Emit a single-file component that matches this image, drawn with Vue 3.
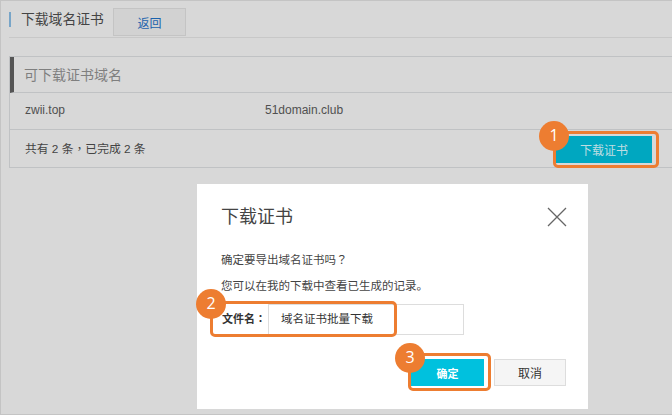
<script setup>
const domains = ['zwii.top', '51domain.club']
</script>

<template>
  <div class="page">
    <header class="top">
      <h1 class="title">下载域名证书</h1>
      <button class="back">返回</button>
    </header>
    <section class="panel">
      <div class="panel-head">可下载证书域名</div>
      <div class="domains">
        <span v-for="d in domains" :key="d" class="domain">{{ d }}</span>
      </div>
      <div class="summary">
        <span>共有 2 条<span class="tc">，</span>已完成 2 条</span>
        <button class="download">下载证书</button>
      </div>
    </section>

    <div class="dialog">
      <div class="dialog-head">
        <h2>下载证书</h2>
        <svg class="close" width="20" height="20" viewBox="0 0 20 20"><path d="M1 1 19 19M19 1 1 19" stroke="#666" stroke-width="1.3" fill="none"/></svg>
      </div>
      <p class="q first">确定要导出域名证书吗<span class="tc">？</span></p>
      <p class="q second">您可以在我的下载中查看已生成的记录。</p>
      <div class="file">
        <label>文件名<span class="tc">：</span></label>
        <div class="input">域名证书批量下载</div>
      </div>
      <div class="actions">
        <button class="ok">确定</button>
        <button class="cancel">取消</button>
      </div>
    </div>

    <div class="ring r1"></div>
    <div class="ring r2"></div>
    <div class="ring r3"></div>
    <div class="badge b1">1</div>
    <div class="badge b2">2</div>
    <div class="badge b3">3</div>
  </div>
</template>

<style>
html, body { margin: 0; padding: 0; }
</style>

<style scoped>
.page {
  position: relative;
  box-sizing: border-box;
  width: 672px;
  height: 415px;
  overflow: hidden;
  background: #d8d8d8;
  border: 1px solid #c4c4c4;
  border-right: 0;
  padding: 7px 0 0 8px;
  font-family: "Liberation Sans", "Noto Sans CJK SC", sans-serif;
  color: #444;
}
.tc { font-family: "Noto Sans CJK TC", sans-serif; }
button { font-family: inherit; padding: 0; cursor: pointer; }
.top {
  display: flex;
  align-items: flex-start;
  height: 29px;
  border-bottom: 1px solid #c8c8c8;
}
.title {
  margin: 4px 8px 0 0;
  padding-left: 10px;
  border-left: 2px solid #78a5c8;
  height: 15px;
  line-height: 15px;
  font-size: 13.8px;
  font-weight: 400;
  color: #444;
  width: 84px;
  white-space: nowrap;
}
.back {
  width: 73px;
  height: 28px;
  border: 1px solid #c4c4c4;
  background: #d2d2d2;
  color: #1a62ad;
  font-size: 12px;
}
.panel {
  margin-top: 18px;
  border: 1px solid #c0c2c4;
  border-right: 0;
  height: 112px;
  box-sizing: border-box;
}
.panel-head {
  box-sizing: border-box;
  height: 36px;
  line-height: 37px;
  border-left: 4px solid #555;
  border-bottom: 1px solid #c0c2c4;
  padding-left: 10px;
  font-size: 14px;
  color: #7f7f7f;
}
.domains {
  box-sizing: border-box;
  height: 37px;
  line-height: 35px;
  display: flex;
  padding-left: 15px;
  border-bottom: 1px solid #c0c2c4;
  font-size: 12px;
  color: #505050;
}
.domain { width: 240px; }
.summary {
  position: relative;
  padding-left: 15px;
  height: 37px;
  line-height: 36px;
  font-size: 11.8px;
  color: #444;
}
.download {
  position: absolute;
  left: 546px;
  top: 6px;
  width: 96px;
  height: 27px;
  border: 0;
  background: #00a7c0;
  color: #bfdde2;
  font-size: 12px;
}
.dialog {
  position: absolute;
  left: 196px;
  top: 183px;
  width: 391px;
  height: 225px;
  box-sizing: border-box;
  background: #fff;
  padding: 20px 0 0 24px;
  color: #444;
}
.dialog-head { display: flex; justify-content: space-between; height: 31px; }
.dialog-head h2 { margin: 0; font-size: 18px; line-height: 26px; font-weight: 400; color: #444; }
.close { margin: 3px 21px 0 0; }
.q { margin: 0; font-size: 11.5px; line-height: 16px; color: #444; }
.first { margin-top: 16px; }
.second { margin-top: 10px; white-space: nowrap; }
.file { display: flex; align-items: stretch; height: 31px; margin: 10px 0 0 0; }
.file label { font-size: 11px; font-weight: 700; line-height: 29px; width: 47px; color: #333; padding-left: 1px; margin-right: -1px; }
.input {
  box-sizing: border-box;
  width: 196px;
  height: 31px;
  border: 1px solid #ddd;
  padding-left: 12px;
  line-height: 29px;
  font-size: 11.5px;
  color: #333;
}
.actions { display: flex; margin: 24px 0 0 190px; gap: 10px; }
.ok {
  width: 73px;
  height: 27px;
  border: 0;
  background: #00c1de;
  color: #fff;
  font-size: 11px;
  font-weight: 700;
}
.cancel {
  width: 72px;
  height: 27px;
  border: 1px solid #ddd;
  background: #f5f5f5;
  color: #333;
  font-size: 12px;
}
.ring {
  position: absolute;
  box-sizing: border-box;
  border: 3px solid #ed7d31;
  border-radius: 5px;
}
.r1 { left: 552px; top: 130px; width: 106px; height: 37px; }
.r2 { left: 209px; top: 300px; width: 187px; height: 36px; }
.r3 { left: 407px; top: 352px; width: 83px; height: 38px; }
.badge {
  position: absolute;
  width: 30px;
  height: 30px;
  border-radius: 50%;
  background: #ed7d31;
  color: #fff;
  text-align: center;
  line-height: 28px;
  font-size: 16px;
  font-family: "Open Sans", "Liberation Sans", sans-serif;
}
.b1 { left: 538px; top: 120px; }
.b2 { left: 195px; top: 288px; }
.b3 { left: 394px; top: 342px; }
</style>
